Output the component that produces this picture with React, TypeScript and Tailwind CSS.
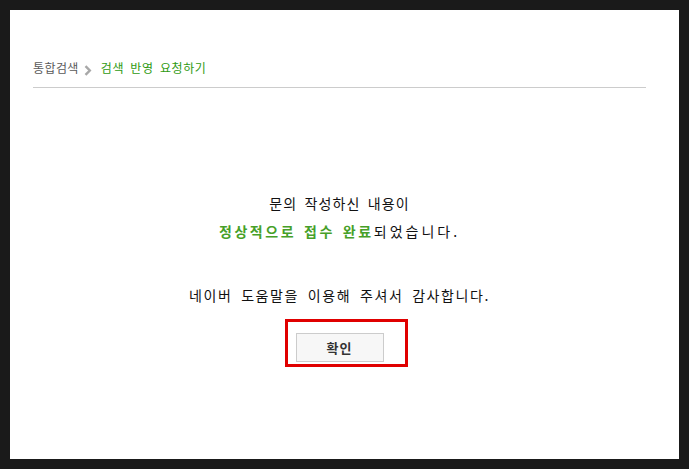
import React from "react";

const font = { fontFamily: '"Noto Sans CJK KR", "Noto Sans", sans-serif' };

export default function App() {
  return (
    <div className="w-[689px] h-[469px] bg-[#1a1a1a] p-[10px]" style={font}>
      <div className="w-full h-full bg-white pl-[23px] pr-[33px] pt-[49px]">
        <div className="flex items-center h-[18px] text-[12px] leading-[18px] border-b border-[#cccccc] pb-[10px] box-content">
          <span className="text-[#5a5a5a] tracking-[0.4px]">통합검색</span>
          <svg width="8" height="11" viewBox="0 0 8 11" className="ml-[5px] mr-[9px] mt-[4px]">
            <path d="M1.5 1.2 L5.8 5.5 L1.5 9.8" stroke="#a8a8a8" strokeWidth="2.4" fill="none" />
          </svg>
          <span className="text-[#2f9a12] tracking-[0.6px] [word-spacing:3px]">검색 반영 요청하기</span>
        </div>
        <div className="flex flex-col items-center text-[14px] text-[#111111] pt-[106px]">
          <p className="leading-[18px] tracking-[1.1px] [word-spacing:3px]">문의 작성하신 내용이</p>
          <p className="leading-[18px] mt-[10px] tracking-[3px]">
            <span className="text-[#46a028] font-bold tracking-[2.6px] [word-spacing:2px]">정상적으로 접수 완료</span>되었습니다.
          </p>
          <p className="leading-[18px] mt-[46px] tracking-[1.6px] [word-spacing:4px]">네이버 도움말을 이용해 주셔서 감사합니다.</p>
          <div className="relative mt-[29px]">
            <button className="block w-[88px] h-[29px] bg-[#f7f7f7] border border-[#cccccc] text-[13px] font-bold text-[#333333] tracking-[1px]">
              확인
            </button>
            <div className="absolute left-[-11px] right-[-24px] top-[-14px] bottom-[-5px] border-[3px] border-[#e00000]" />
          </div>
        </div>
      </div>
    </div>
  );
}
